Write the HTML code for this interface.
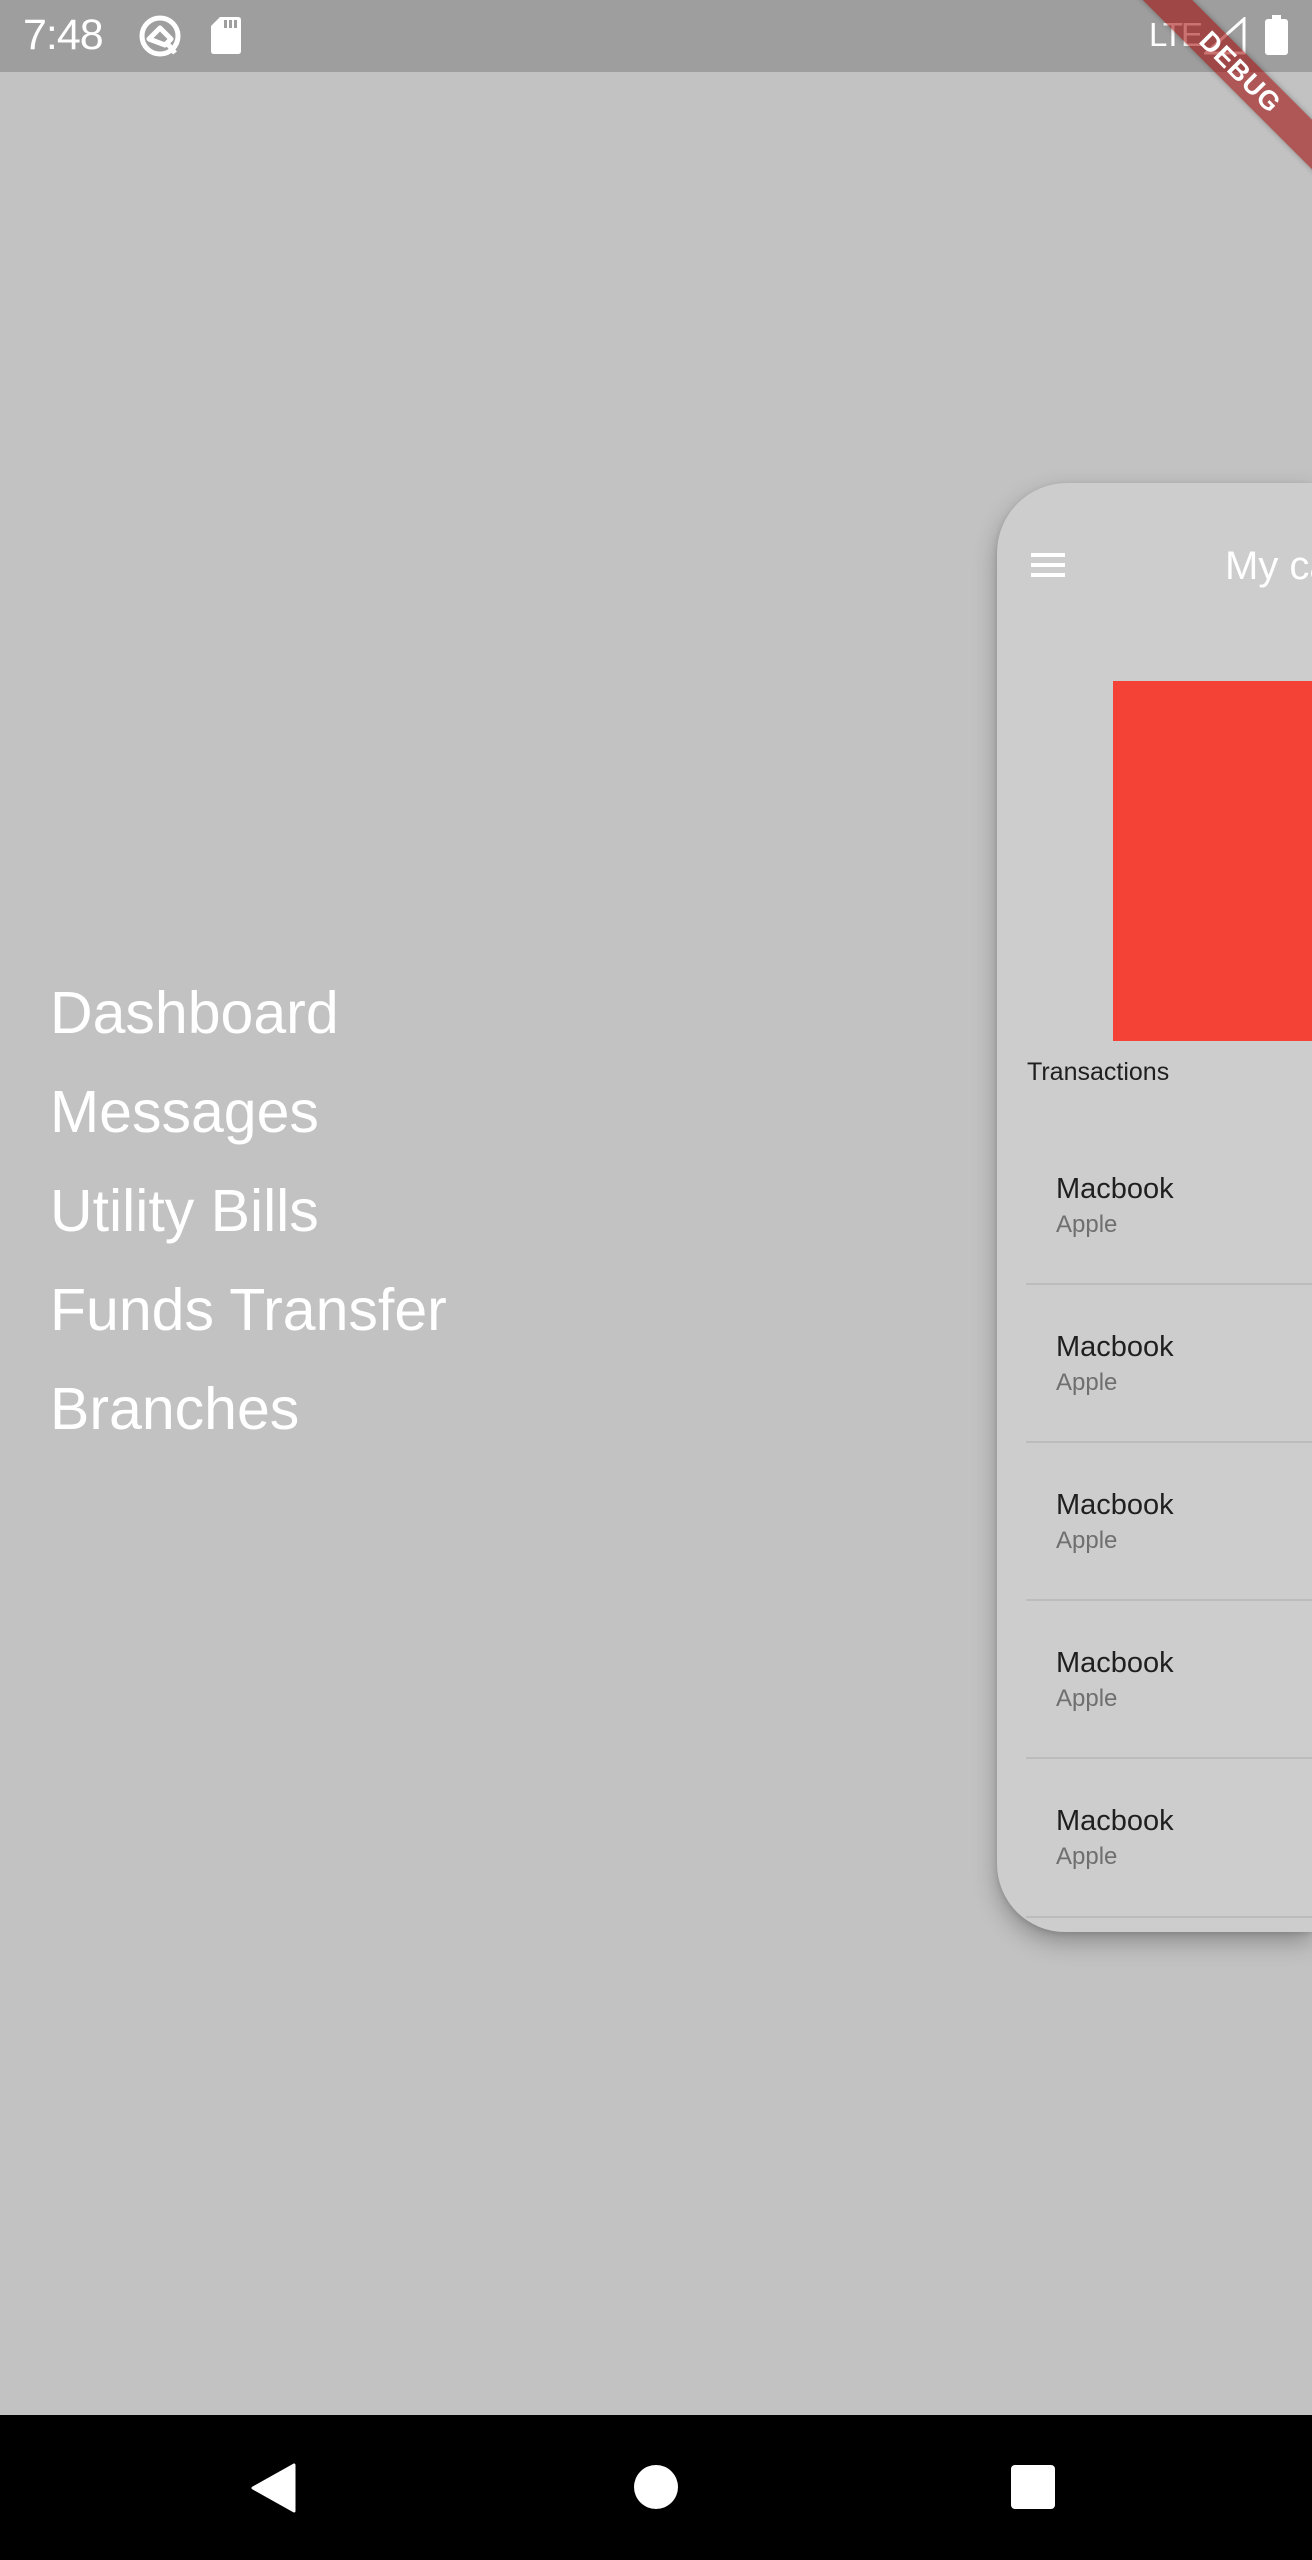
<!DOCTYPE html>
<html><head><meta charset="utf-8"><style>
*{margin:0;padding:0;box-sizing:border-box}
html,body{width:1312px;height:2560px;overflow:hidden;background:#c2c2c2;font-family:"Liberation Sans",Roboto,sans-serif;position:relative}
.abs{position:absolute}
.clip{left:0;top:0;width:1312px;height:2560px;overflow:hidden}
.status{left:0;top:0;width:1312px;height:72px;background:#9e9e9e}
.menu{left:50px;color:#fff;font-size:59px;line-height:1;white-space:nowrap}
.card{left:997px;top:483px;width:315px;height:1449px;background:#cdcdcd;border-radius:70px 0 0 68px;box-shadow:0 10px 24px rgba(0,0,0,.28),0 2px 6px rgba(0,0,0,.12);overflow:hidden}
.item{position:absolute;left:0;width:315px}
.t1{position:absolute;left:59px;font-size:29px;color:#1f1f1f;white-space:nowrap}
.t2{position:absolute;left:59px;font-size:24px;color:#6f6f6f;white-space:nowrap}
.div{position:absolute;left:29px;width:286px;height:2px;background:#bcbcbc}
.nav{left:0;top:2415px;width:1312px;height:145px;background:#000}
</style></head><body>
<div class="abs clip">
<div class="abs status"></div>
<div class="abs" style="left:23px;top:12px;color:#fff;font-size:43px;line-height:46px;letter-spacing:-1px">7:48</div>
<svg class="abs" style="left:137px;top:13px" width="46" height="46" viewBox="0 0 46 46"><circle cx="23" cy="23" r="18" fill="none" stroke="#fff" stroke-width="5"/><path d="M12 26 L23 15 L34 26 L28 32 Z" fill="none" stroke="#fff" stroke-width="5" stroke-linejoin="round"/><path d="M30 30 L38 40" stroke="#fff" stroke-width="5"/></svg>
<svg class="abs" style="left:211px;top:17px" width="30" height="37" viewBox="0 0 30 37"><path d="M9 0 H27 Q30 0 30 3 V34 Q30 37 27 37 H3 Q0 37 0 34 V9 Z" fill="#fff"/><rect x="13" y="3" width="3" height="8" fill="#9e9e9e"/><rect x="18" y="3" width="3" height="8" fill="#9e9e9e"/><rect x="23" y="3" width="3" height="8" fill="#9e9e9e"/></svg>
<div class="abs" style="left:1149px;top:16px;color:#fff;font-size:33px;line-height:38px;letter-spacing:-2px">LTE</div>
<svg class="abs" style="left:1204px;top:17px" width="42" height="38" viewBox="0 0 42 38"><path d="M40 2 V36 H2 Z" fill="none" stroke="#fff" stroke-width="3"/></svg>
<svg class="abs" style="left:1265px;top:15px" width="23" height="40" viewBox="0 0 23 40"><rect x="7" y="0" width="9" height="5" fill="#fff"/><rect x="0" y="4" width="23" height="36" rx="3" fill="#fff"/></svg>

<div class="abs menu" style="top:984px">Dashboard</div>
<div class="abs menu" style="top:1083px">Messages</div>
<div class="abs menu" style="top:1182px">Utility Bills</div>
<div class="abs menu" style="top:1281px">Funds Transfer</div>
<div class="abs menu" style="top:1380px">Branches</div>

<div class="abs card">
  <div class="abs" style="left:34px;top:70px;width:34px;height:4px;background:#fff"></div>
  <div class="abs" style="left:34px;top:80px;width:34px;height:4px;background:#fff"></div>
  <div class="abs" style="left:34px;top:90px;width:34px;height:4px;background:#fff"></div>
  <div class="abs" style="left:228px;top:60px;color:#fff;font-size:40px;line-height:46px;white-space:nowrap">My cards</div>
  <div class="abs" style="left:116px;top:198px;width:199px;height:360px;background:#f44336"></div>
  <div class="abs" style="left:30px;top:574px;font-size:25px;line-height:30px;color:#1f1f1f">Transactions</div>
  <div class="item" style="top:690px"><div class="t1" style="top:0">Macbook</div><div class="t2" style="top:38px">Apple</div></div>
  <div class="div" style="top:800px"></div>
  <div class="item" style="top:848px"><div class="t1" style="top:0">Macbook</div><div class="t2" style="top:38px">Apple</div></div>
  <div class="div" style="top:958px"></div>
  <div class="item" style="top:1006px"><div class="t1" style="top:0">Macbook</div><div class="t2" style="top:38px">Apple</div></div>
  <div class="div" style="top:1116px"></div>
  <div class="item" style="top:1164px"><div class="t1" style="top:0">Macbook</div><div class="t2" style="top:38px">Apple</div></div>
  <div class="div" style="top:1274px"></div>
  <div class="item" style="top:1322px"><div class="t1" style="top:0">Macbook</div><div class="t2" style="top:38px">Apple</div></div>
  <div class="div" style="top:1433px"></div>
</div>

<div class="abs" style="left:1040px;top:55px;width:400px;height:35px;background:rgba(160,0,0,.55);transform:rotate(45deg);color:#fff;font-weight:bold;font-size:27px;line-height:35px;text-align:center;letter-spacing:1px;box-shadow:0 0 6px rgba(0,0,0,.3)">DEBUG</div>

<div class="abs nav"></div>
<svg class="abs" style="left:250px;top:2463px" width="46" height="50" viewBox="0 0 46 50"><path d="M44 2 V48 L3 25 Z" fill="#fff" stroke="#fff" stroke-width="3" stroke-linejoin="round"/></svg>
<div class="abs" style="left:634px;top:2465px;width:44px;height:44px;border-radius:50%;background:#fff"></div>
<div class="abs" style="left:1011px;top:2465px;width:44px;height:44px;border-radius:4px;background:#fff"></div>
</div>
</body></html>
